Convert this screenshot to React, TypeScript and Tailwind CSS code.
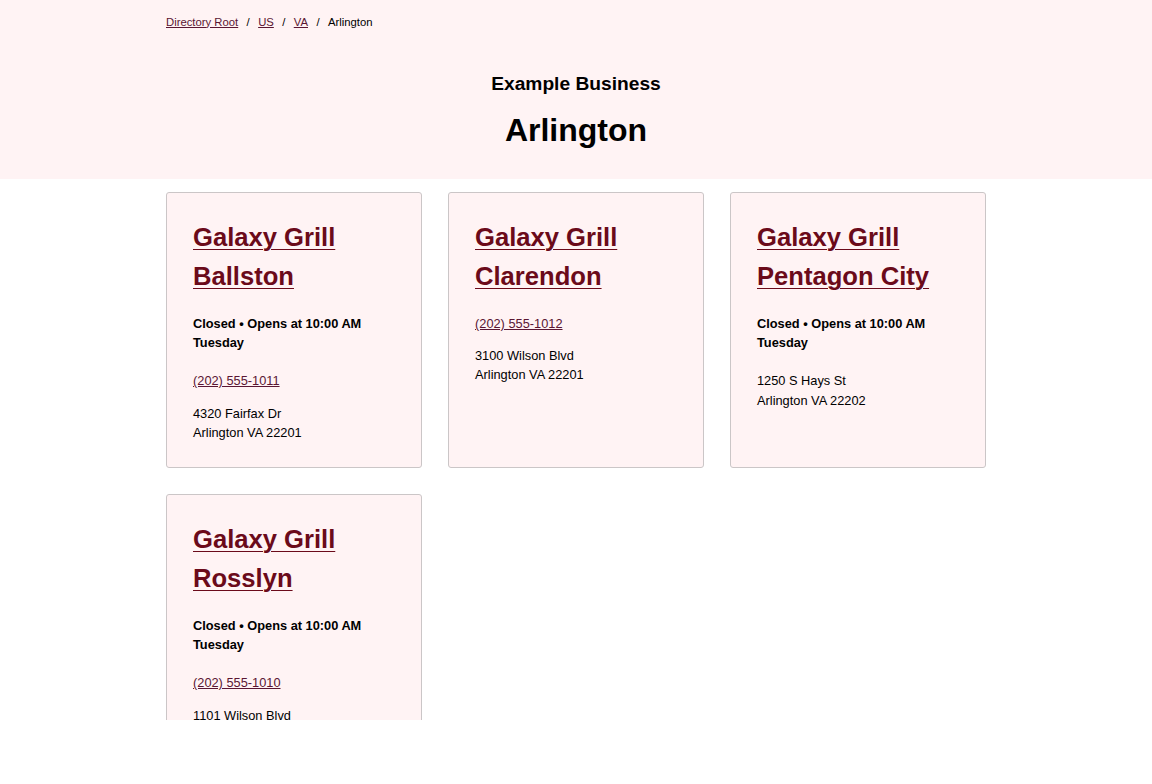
import React from 'react';

type Location = {
  name: string;
  status?: string;
  phone?: string;
  street: string;
  city: string;
};

const locations: Location[] = [
  {
    name: 'Galaxy Grill Ballston',
    status: 'Closed • Opens at 10:00 AM Tuesday',
    phone: '(202) 555-1011',
    street: '4320 Fairfax Dr',
    city: 'Arlington VA 22201',
  },
  {
    name: 'Galaxy Grill Clarendon',
    phone: '(202) 555-1012',
    street: '3100 Wilson Blvd',
    city: 'Arlington VA 22201',
  },
  {
    name: 'Galaxy Grill Pentagon City',
    status: 'Closed • Opens at 10:00 AM Tuesday',
    street: '1250 S Hays St',
    city: 'Arlington VA 22202',
  },
  {
    name: 'Galaxy Grill Rosslyn',
    status: 'Closed • Opens at 10:00 AM Tuesday',
    phone: '(202) 555-1010',
    street: '1101 Wilson Blvd',
    city: 'Arlington VA 22209',
  },
];

export default function App() {
  return (
    <div className="h-[720px] overflow-hidden bg-white font-['Liberation_Sans',Arial,sans-serif] text-black">
      <header className="h-[179px] bg-[#fff3f4]">
        <div className="mx-auto w-[820px]">
          <nav className="flex h-[44px] items-center gap-[8.4px] text-[11.3px]">
            <a href="#" className="text-[#5a1633] underline">Directory Root</a>
            <span>/</span>
            <a href="#" className="text-[#5a1633] underline">US</a>
            <span>/</span>
            <a href="#" className="text-[#5a1633] underline">VA</a>
            <span>/</span>
            <span>Arlington</span>
          </nav>
          <div className="mt-[28px] text-center text-[19.2px] font-bold leading-[24px]">Example Business</div>
          <h1 className="mt-[14px] text-center text-[32px] font-bold leading-[40px]">Arlington</h1>
        </div>
      </header>

      <main className="mx-auto mt-[13px] grid w-[820px] grid-cols-3 gap-[26px]">
        {locations.map((loc) => (
          <Card key={loc.name} loc={loc} />
        ))}
      </main>
    </div>
  );
}

function Card({ loc }: { loc: Location }) {
  return (
    <div className="rounded-[3px] border border-[#cbc6c7] bg-[#fff3f4] px-[26px] pt-[25px] pb-[25px]">
      <h2 className="mb-[18px] text-[25.6px] font-bold leading-[39px]">
        <a href="#" className="text-[#6b0a1a] underline decoration-1 underline-offset-[3px]">
          {loc.name}
        </a>
      </h2>
      {loc.status && (
        <div className="mb-[19px] text-[12.8px] font-bold leading-[19.2px]">{loc.status}</div>
      )}
      {loc.phone && (
        <div className="mb-[13px] text-[12.8px] leading-[19.2px]">
          <a href="#" className="text-[#5a1633] underline">{loc.phone}</a>
        </div>
      )}
      <div className="text-[12.8px] leading-[19.2px]">
        <div>{loc.street}</div>
        <div>{loc.city}</div>
      </div>
    </div>
  );
}
